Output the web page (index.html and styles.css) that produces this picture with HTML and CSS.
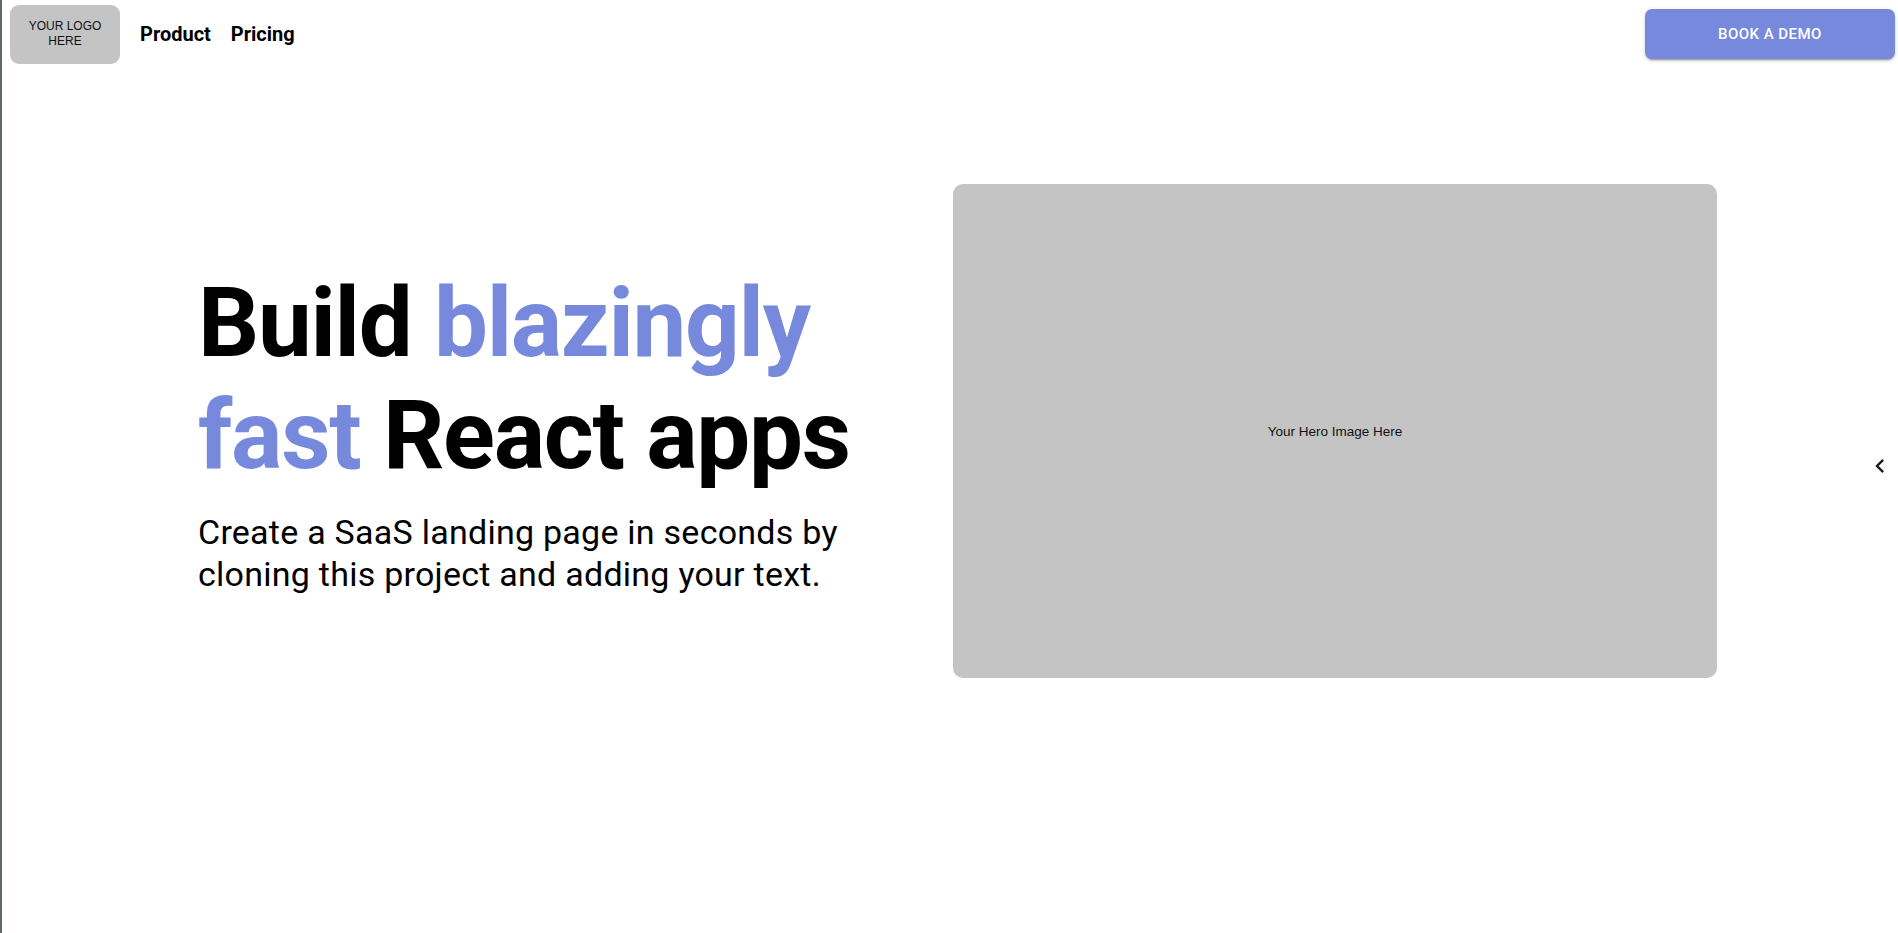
FILE: index.html
```html
<!DOCTYPE html>
<html lang="en">
<head>
    <meta charset="UTF-8">
    <meta name="viewport" content="width=device-width, initial-scale=1.0">
    <title>Landing Page</title>
    <link rel="stylesheet" href="styles.css">
</head>
<body>
    <header class="topbar">
        <div class="logo">YOUR LOGO<br>HERE</div>
        <nav class="nav">
            <a href="#">Product</a>
            <a href="#">Pricing</a>
        </nav>
        <a href="#" class="demo-btn">Book a demo</a>
    </header>

    <main class="hero">
        <div class="hero-text">
            <h1 class="hero-title">Build <span class="accent">blazingly fast</span> React apps</h1>
            <p class="hero-sub">Create a SaaS landing page in seconds by cloning this project and adding your text.</p>
        </div>
        <div class="hero-image">Your Hero Image Here</div>
    </main>

    <!-- drawer toggle -->
    <button class="drawer-toggle" aria-label="Open drawer">
        <svg viewBox="0 0 24 24" width="28" height="28"><path d="M15.41 7.41 14 6l-6 6 6 6 1.41-1.41L10.83 12z"/></svg>
    </button>
</body>
</html>
```

FILE: styles.css
```css
/* General styles */
body {
    font-family: Roboto, "Liberation Sans", Arial, sans-serif;
    background-color: #fff;
    color: #000;
    margin: 0;
    padding: 0;
    min-height: 100vh;
    border-left: 2px solid #5f686b;
}

/* Header */
.topbar {
    display: flex;
    align-items: center;
    height: 68px;
    padding: 0 3px 0 8px;
    box-sizing: border-box;
}

.logo {
    display: flex;
    align-items: center;
    justify-content: center;
    text-align: center;
    width: 110px;
    height: 59px;
    background-color: #c4c4c4;
    border-radius: 9px;
    font-family: "Liberation Sans", Arial, sans-serif;
    font-size: 12px;
    line-height: 15px;
    color: #111;
}

.nav {
    display: flex;
    gap: 20px;
    margin-left: 20px;
}

.nav a {
    color: #000;
    text-decoration: none;
    font-size: 20px;
    font-weight: 700;
}

.demo-btn {
    margin-left: auto;
    display: flex;
    align-items: center;
    justify-content: center;
    width: 250px;
    height: 50px;
    background-color: #7789dd;
    color: #fff;
    text-decoration: none;
    text-transform: uppercase;
    font-size: 15px;
    font-weight: 500;
    letter-spacing: 0.46px;
    border-radius: 7px;
    box-shadow: 0 3px 1px -2px rgba(0, 0, 0, 0.2), 0 2px 2px 0 rgba(0, 0, 0, 0.14), 0 1px 5px 0 rgba(0, 0, 0, 0.12);
}

/* Hero */
.hero {
    display: flex;
    align-items: center;
    justify-content: space-between;
    padding: 116px 181px 0 196px;
}

.hero-text {
    max-width: 700px;
}

.hero-title {
    margin: 0;
    font-size: 96px;
    line-height: 112px;
    font-weight: 700;
    letter-spacing: -1.3px;
}

.accent {
    color: #7789dd;
}

.hero-sub {
    margin: 20px 0 0;
    font-size: 34px;
    line-height: 42px;
    font-weight: 400;
    letter-spacing: 0.25px;
}

.hero-image {
    flex: none;
    display: flex;
    align-items: center;
    justify-content: center;
    width: 764px;
    height: 494px;
    background-color: #c4c4c4;
    border-radius: 10px;
    font-family: "Liberation Sans", Arial, sans-serif;
    font-size: 13.5px;
    color: #111;
}

/* Drawer toggle */
.drawer-toggle {
    position: fixed;
    top: 452px;
    right: 4px;
    padding: 0;
    border: none;
    background: none;
    width: 28px;
    height: 28px;
}

.drawer-toggle svg {
    display: block;
    fill: #1a1a1a;
}
```
